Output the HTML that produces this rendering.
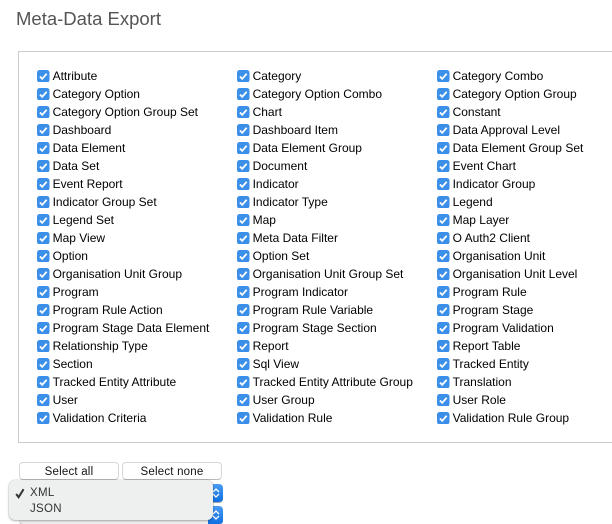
<!DOCTYPE html>
<html><head><meta charset="utf-8"><style>
html,body{margin:0;padding:0;background:#fff;width:612px;height:524px;overflow:hidden}
body{position:relative;font-family:"Liberation Sans",sans-serif}
.a{position:absolute}
h2{position:absolute;left:16px;top:8px;margin:0;font-weight:400;font-size:18.5px;line-height:22px;color:#555;white-space:nowrap}
#p{position:absolute;left:18px;top:51px;width:640px;height:390px;border:1px solid #ccc}
.r{position:absolute;height:18px;line-height:18px;font-size:12px;color:#000;white-space:nowrap;padding-left:15.6px}
.r svg{position:absolute;left:0;top:2.5px;width:12.5px;height:12.5px}
.b{position:absolute;top:462px;height:16px;border:1px solid #d8d8d8;border-bottom-color:#bbb;border-radius:4px;background:#fff;font-size:11.5px;line-height:18px;text-align:center;color:#111;letter-spacing:.2px}
.s{position:absolute;left:19px;width:203.5px;height:18px;background:#eee;border-radius:4px;overflow:hidden;border-bottom:1px solid #aaa}
.s i{position:absolute;right:0;top:0;width:15px;height:100%;background:linear-gradient(#4a9cf5,#0f6fe0)}
.s svg{position:absolute;right:1.5px;top:3px;width:10px;height:12px}
#m{position:absolute;left:9px;top:480px;width:204px;height:40px;background:#eef0ef;border-radius:6px;box-shadow:0 1px 2px rgba(0,0,0,.28),0 0 1px rgba(0,0,0,.3);font-size:11.5px;color:#333}
#m span{position:absolute;left:21px;letter-spacing:.3px}
</style></head><body>
<h2>Meta-Data Export</h2>
<div id="p"></div>
<svg width="0" height="0" style="position:absolute"><defs><symbol id="c" viewBox="0 0 12 12"><rect width="12" height="12" rx="2.5" fill="#3b8fe8"/><path d="M2.8 6.2L5 8.5 9.3 3.6" fill="none" stroke="#fff" stroke-width="1.7"/></symbol></defs></svg>
<div class="r" style="left:37px;top:67px"><svg><use href="#c"/></svg>Attribute</div>
<div class="r" style="left:237px;top:67px"><svg><use href="#c"/></svg>Category</div>
<div class="r" style="left:437px;top:67px"><svg><use href="#c"/></svg>Category Combo</div>
<div class="r" style="left:37px;top:85px"><svg><use href="#c"/></svg>Category Option</div>
<div class="r" style="left:237px;top:85px"><svg><use href="#c"/></svg>Category Option Combo</div>
<div class="r" style="left:437px;top:85px"><svg><use href="#c"/></svg>Category Option Group</div>
<div class="r" style="left:37px;top:103px"><svg><use href="#c"/></svg>Category Option Group Set</div>
<div class="r" style="left:237px;top:103px"><svg><use href="#c"/></svg>Chart</div>
<div class="r" style="left:437px;top:103px"><svg><use href="#c"/></svg>Constant</div>
<div class="r" style="left:37px;top:121px"><svg><use href="#c"/></svg>Dashboard</div>
<div class="r" style="left:237px;top:121px"><svg><use href="#c"/></svg>Dashboard Item</div>
<div class="r" style="left:437px;top:121px"><svg><use href="#c"/></svg>Data Approval Level</div>
<div class="r" style="left:37px;top:139px"><svg><use href="#c"/></svg>Data Element</div>
<div class="r" style="left:237px;top:139px"><svg><use href="#c"/></svg>Data Element Group</div>
<div class="r" style="left:437px;top:139px"><svg><use href="#c"/></svg>Data Element Group Set</div>
<div class="r" style="left:37px;top:157px"><svg><use href="#c"/></svg>Data Set</div>
<div class="r" style="left:237px;top:157px"><svg><use href="#c"/></svg>Document</div>
<div class="r" style="left:437px;top:157px"><svg><use href="#c"/></svg>Event Chart</div>
<div class="r" style="left:37px;top:175px"><svg><use href="#c"/></svg>Event Report</div>
<div class="r" style="left:237px;top:175px"><svg><use href="#c"/></svg>Indicator</div>
<div class="r" style="left:437px;top:175px"><svg><use href="#c"/></svg>Indicator Group</div>
<div class="r" style="left:37px;top:193px"><svg><use href="#c"/></svg>Indicator Group Set</div>
<div class="r" style="left:237px;top:193px"><svg><use href="#c"/></svg>Indicator Type</div>
<div class="r" style="left:437px;top:193px"><svg><use href="#c"/></svg>Legend</div>
<div class="r" style="left:37px;top:211px"><svg><use href="#c"/></svg>Legend Set</div>
<div class="r" style="left:237px;top:211px"><svg><use href="#c"/></svg>Map</div>
<div class="r" style="left:437px;top:211px"><svg><use href="#c"/></svg>Map Layer</div>
<div class="r" style="left:37px;top:229px"><svg><use href="#c"/></svg>Map View</div>
<div class="r" style="left:237px;top:229px"><svg><use href="#c"/></svg>Meta Data Filter</div>
<div class="r" style="left:437px;top:229px"><svg><use href="#c"/></svg>O Auth2 Client</div>
<div class="r" style="left:37px;top:247px"><svg><use href="#c"/></svg>Option</div>
<div class="r" style="left:237px;top:247px"><svg><use href="#c"/></svg>Option Set</div>
<div class="r" style="left:437px;top:247px"><svg><use href="#c"/></svg>Organisation Unit</div>
<div class="r" style="left:37px;top:265px"><svg><use href="#c"/></svg>Organisation Unit Group</div>
<div class="r" style="left:237px;top:265px"><svg><use href="#c"/></svg>Organisation Unit Group Set</div>
<div class="r" style="left:437px;top:265px"><svg><use href="#c"/></svg>Organisation Unit Level</div>
<div class="r" style="left:37px;top:283px"><svg><use href="#c"/></svg>Program</div>
<div class="r" style="left:237px;top:283px"><svg><use href="#c"/></svg>Program Indicator</div>
<div class="r" style="left:437px;top:283px"><svg><use href="#c"/></svg>Program Rule</div>
<div class="r" style="left:37px;top:301px"><svg><use href="#c"/></svg>Program Rule Action</div>
<div class="r" style="left:237px;top:301px"><svg><use href="#c"/></svg>Program Rule Variable</div>
<div class="r" style="left:437px;top:301px"><svg><use href="#c"/></svg>Program Stage</div>
<div class="r" style="left:37px;top:319px"><svg><use href="#c"/></svg>Program Stage Data Element</div>
<div class="r" style="left:237px;top:319px"><svg><use href="#c"/></svg>Program Stage Section</div>
<div class="r" style="left:437px;top:319px"><svg><use href="#c"/></svg>Program Validation</div>
<div class="r" style="left:37px;top:337px"><svg><use href="#c"/></svg>Relationship Type</div>
<div class="r" style="left:237px;top:337px"><svg><use href="#c"/></svg>Report</div>
<div class="r" style="left:437px;top:337px"><svg><use href="#c"/></svg>Report Table</div>
<div class="r" style="left:37px;top:355px"><svg><use href="#c"/></svg>Section</div>
<div class="r" style="left:237px;top:355px"><svg><use href="#c"/></svg>Sql View</div>
<div class="r" style="left:437px;top:355px"><svg><use href="#c"/></svg>Tracked Entity</div>
<div class="r" style="left:37px;top:373px"><svg><use href="#c"/></svg>Tracked Entity Attribute</div>
<div class="r" style="left:237px;top:373px"><svg><use href="#c"/></svg>Tracked Entity Attribute Group</div>
<div class="r" style="left:437px;top:373px"><svg><use href="#c"/></svg>Translation</div>
<div class="r" style="left:37px;top:391px"><svg><use href="#c"/></svg>User</div>
<div class="r" style="left:237px;top:391px"><svg><use href="#c"/></svg>User Group</div>
<div class="r" style="left:437px;top:391px"><svg><use href="#c"/></svg>User Role</div>
<div class="r" style="left:37px;top:409px"><svg><use href="#c"/></svg>Validation Criteria</div>
<div class="r" style="left:237px;top:409px"><svg><use href="#c"/></svg>Validation Rule</div>
<div class="r" style="left:437px;top:409px"><svg><use href="#c"/></svg>Validation Rule Group</div>
<div class="b" style="left:19px;width:98px">Select all</div>
<div class="b" style="left:122px;width:98px">Select none</div>
<div class="s" style="top:484px"><i></i><svg viewBox="0 0 10 12"><path d="M2 5L5 2 8 5M2 7L5 10 8 7" fill="none" stroke="#fff" stroke-width="1.3"/></svg></div>
<div class="s" style="top:506px"><i></i><svg viewBox="0 0 10 12"><path d="M2 5L5 2 8 5M2 7L5 10 8 7" fill="none" stroke="#fff" stroke-width="1.3"/></svg></div>
<div id="m">
<svg class="a" style="left:6px;top:8px" width="10" height="11" viewBox="0 0 10 11"><path d="M1.2 6L3.6 9.2 8.6 1.2" fill="none" stroke="#333" stroke-width="2"/></svg>
<span style="top:7px">XML</span><span style="top:23px">JSON</span>
</div>
</body></html>
